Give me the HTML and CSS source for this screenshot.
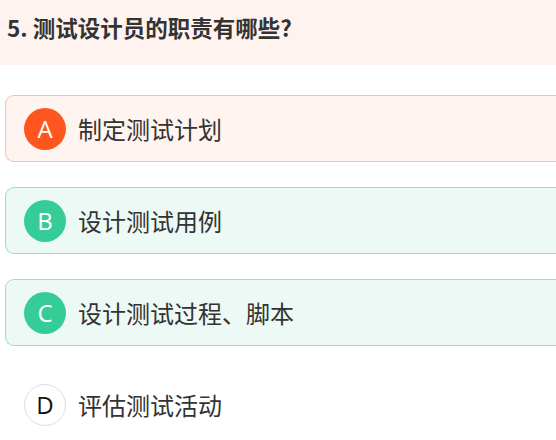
FILE: index.html
```html
<!DOCTYPE html>
<html lang="zh">
<head>
<meta charset="utf-8">
<link rel="stylesheet" href="styles.css">
</head>
<body>
<div class="header">
  <h1 class="title">5. 测试设计员的职责有哪些?</h1>
</div>
<div class="options">
  <div class="option wrong">
    <span class="badge">A</span>
    <span class="label">制定测试计划</span>
  </div>
  <div class="option right">
    <span class="badge">B</span>
    <span class="label">设计测试用例</span>
  </div>
  <div class="option right">
    <span class="badge">C</span>
    <span class="label">设计测试过程、脚本</span>
  </div>
  <div class="option plain">
    <span class="badge">D</span>
    <span class="label">评估测试活动</span>
  </div>
</div>
</body>
</html>
```
FILE: styles.css
```css
html, body {
  margin: 0;
  padding: 0;
  overflow: hidden;
  background: #ffffff;
}
body {
  font-family: "Noto Sans CJK SC", "Noto Sans", sans-serif;
  color: #333333;
  width: 556px;
  height: 440px;
}
.header {
  background: #fff3ef;
  height: 65px;
  box-sizing: border-box;
  padding: 12px 0 0 7px;
}
.title {
  margin: 0;
  font-size: 22.5px;
  line-height: 30px;
  font-weight: 700;
  color: #333333;
}
.options {
  display: flex;
  flex-direction: column;
  gap: 25px;
  padding: 30px 0 0 5px;
}
.option {
  display: flex;
  align-items: center;
  gap: 12px;
  height: 67px;
  box-sizing: border-box;
  padding-left: 18px;
  border: 1px solid transparent;
  border-right: 0;
  border-radius: 9px 0 0 9px;
}
.option.wrong {
  background: #fff4f0;
  border-color: #fdbca5;
}
.option.right {
  background: #edf9f5;
  border-color: #97e2c7;
}
.badge {
  width: 42px;
  height: 42px;
  border-radius: 50%;
  display: flex;
  align-items: center;
  justify-content: center;
  font-family: "Open Sans", "Noto Sans", sans-serif;
  font-size: 24px;
  color: #ffffff;
  box-sizing: border-box;
  flex: none;
}
.wrong .badge {
  background: #ff561f;
}
.right .badge {
  background: #36cc98;
}
.plain .badge {
  border: 1px solid #dddddd;
  color: #111111;
  background: #ffffff;
}
.label {
  font-size: 24px;
  line-height: 30px;
  color: #333333;
}
```
